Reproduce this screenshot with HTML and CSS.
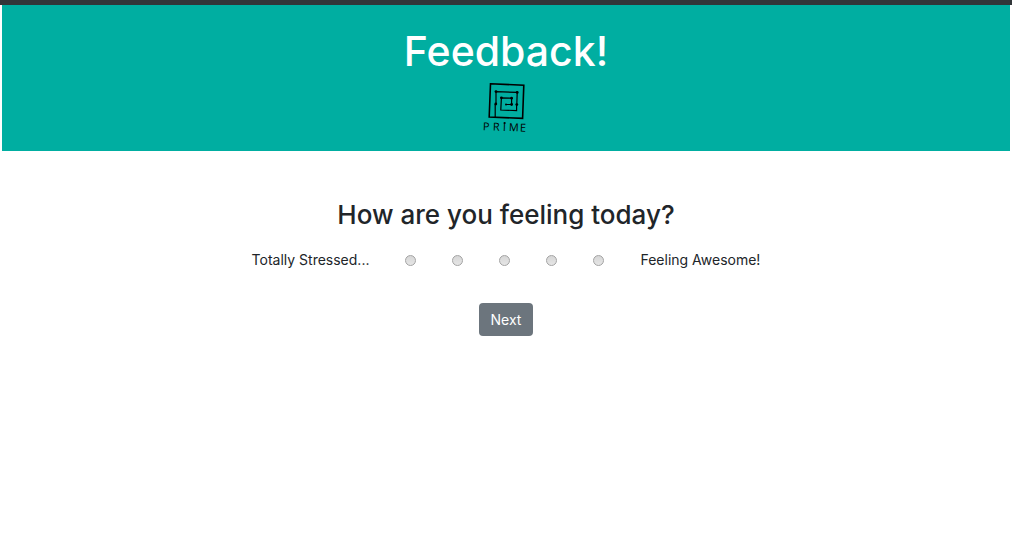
FILE: index.html
```html
<!DOCTYPE html>
<html lang="en">
<head>
<meta charset="utf-8">
<meta name="viewport" content="width=device-width, initial-scale=1">
<title>Feedback</title>
<link rel="stylesheet" href="styles.css">
</head>
<body>
<header class="banner">
  <h1 class="banner-title">Feedback!</h1>
  <svg class="logo" viewBox="0 0 48 52" role="img" aria-label="Prime">
    <g fill="none" stroke="#000" stroke-width="1.6">
      <path d="M8.5 1.8 41.8 3.2 40.6 36.4 7.2 35Z"/>
      <path stroke-width="1.2" d="M13.2 35V22M14 22V9.6L35.2 10.4 34.8 22.7M34.6 23V28.6L18.8 28 19.4 15.8 29.6 16.2V22.5H24"/>
    </g>
    <g>
      <circle cx="14" cy="9.6" r="1.4"/><circle cx="13.8" cy="22" r="1.4"/><circle cx="35.2" cy="10.4" r="1.4"/>
      <circle cx="34.8" cy="22.6" r="1.4"/><circle cx="19.4" cy="15.8" r="1.4"/><circle cx="29.6" cy="16.2" r="1.4"/>
      <circle cx="29.6" cy="22.5" r="1.4"/><circle cx="24" cy="22.5" r="1"/><circle cx="22.6" cy="41" r="1.1"/>
    </g>
    <text class="logo-text" transform="rotate(2 24 44)" x="1 11 21 27 38" y="49">PRIME</text>
  </svg>
</header>
<main class="content">
  <form class="survey">
    <h2 class="question" id="question">How are you feeling today?</h2>
    <div class="scale" role="radiogroup" aria-labelledby="question">
      <label for="r1">Totally Stressed...</label>
      <input class="choice" type="radio" name="feeling" id="r1" value="1">
      <input class="choice" type="radio" name="feeling" value="2" aria-label="2">
      <input class="choice" type="radio" name="feeling" value="3" aria-label="3">
      <input class="choice" type="radio" name="feeling" value="4" aria-label="4">
      <input class="choice" type="radio" name="feeling" id="r5" value="5">
      <label for="r5">Feeling Awesome!</label>
    </div>
    <button class="next" type="button">Next</button>
  </form>
</main>
</body>
</html>
```

FILE: styles.css
```css
* { box-sizing: border-box; }
body {
  margin: 0;
  padding: 0 2px;
  border-top: 5px solid #323639;
  background: #fff;
  color: #212529;
  font: 14px/21px Inter, "Liberation Sans", sans-serif;
}
.banner {
  display: flex;
  flex-direction: column;
  align-items: center;
  padding: 20px 16px 17px;
  background: #00aea1;
}
.banner-title {
  margin: 0 0 5px;
  color: #fff;
  font-size: 41px;
  line-height: 52px;
  font-weight: 500;
}
.logo { width: 48px; height: 52px; }
.logo-text { font: 11px "Open Sans", sans-serif; }
.content { padding: 47px 16px; }
.survey {
  display: flex;
  flex-direction: column;
  align-items: center;
}
.question {
  margin: 0 0 17px;
  font-size: 26px;
  line-height: 34px;
  font-weight: 500;
}
.scale {
  display: flex;
  align-items: center;
  gap: 36px;
}
.choice {
  appearance: none;
  width: 11px;
  height: 11px;
  margin: 2px 0 0;
  border: 1px solid #a3a3a3;
  border-radius: 50%;
  background: linear-gradient(#d6d6d6, #e6e6e6);
}
.choice:checked { background: radial-gradient(#333 35%, #ddd 40%); }
.next {
  margin: 33px 0 0;
  padding: 6px 12px;
  border: 0;
  border-radius: 4px;
  background: #6c757d;
  color: #fff;
  font: inherit;
}
```
